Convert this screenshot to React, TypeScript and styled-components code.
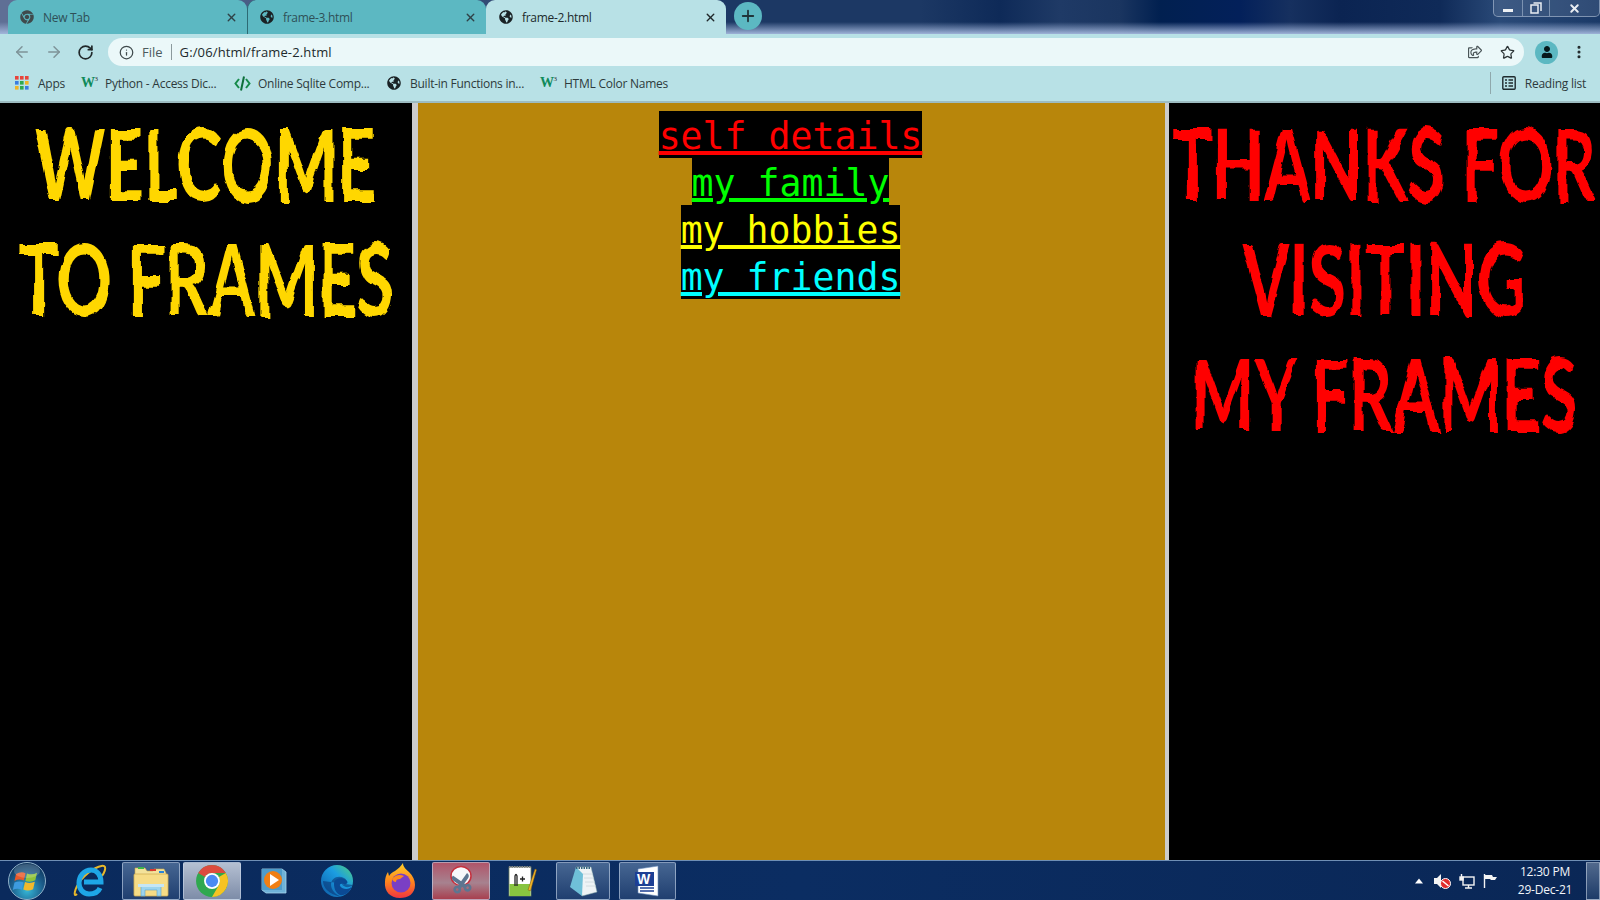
import React from "react";
import styled, { createGlobalStyle } from "styled-components";
import { ArrowLeft, ArrowRight, RotateCw, Info, Star, MoreVertical, X, Plus } from "lucide-react";
import { FaGlobeAmericas, FaChrome, FaRegShareSquare, FaUser, FaCut } from "react-icons/fa";

const Global = createGlobalStyle`
  html, body { margin: 0; padding: 0; background: #000; }
  body { width: 1600px; height: 900px; overflow: hidden; font-family: "Open Sans", "Liberation Sans", sans-serif; }
  a { color: inherit; }
`;

const Screen = styled.div`
  width: 1600px;
  height: 900px;
  display: flex;
  flex-direction: column;
  overflow: hidden;
`;

const TabStrip = styled.div`
  height: 34px;
  flex: none;
  display: flex;
  align-items: stretch;
  padding-left: 8px;
  background:
    linear-gradient(180deg, rgba(150,170,210,0) 0, rgba(150,170,210,0) 22px, rgba(165,185,222,.95) 34px),
    linear-gradient(90deg, #5f6f95 0, #5f6f95 8px, #1c3864 730px, #1c3864 920px, #0e2a58 1000px, #1f3a66 1060px, #1a3560 1120px, #012050 1160px, #03205a 1240px, #16305f 1290px, #0b2452 1340px, #0f2a58 1440px, #2a4a78 1500px, #1b3a68 1600px);
`;

const Tab = styled.div<{ $active?: boolean; $sep?: boolean }>`
  width: ${(p) => (p.$active ? 240 : 239)}px;
  flex: none;
  box-sizing: border-box;
  display: flex;
  align-items: center;
  padding: 0 9px 0 ${(p) => (p.$active ? 13 : 12)}px;
  gap: 9px;
  border-radius: 9px 9px 0 0;
  background: ${(p) => (p.$active ? "#b8e1e6" : "#5cb8c2")};
  color: ${(p) => (p.$active ? "#202a2c" : "#2f5057")};
  border-left: ${(p) => (p.$sep ? "1px solid #2d6a74" : "0 solid transparent")};
  font-size: 12px;
  letter-spacing: -0.3px;
  svg { flex: none; }
`;

const TabTitle = styled.span`
  flex: 1;
  white-space: nowrap;
`;

const NewTab = styled.div`
  width: 28px;
  height: 28px;
  flex: none;
  margin: 2px 0 0 8px;
  border-radius: 50%;
  background: #5cb8c2;
  display: flex;
  align-items: center;
  justify-content: center;
  color: #20353a;
`;

const WindowButtons = styled.div`
  margin-left: auto;
  width: 107px;
  height: 17px;
  box-sizing: border-box;
  display: grid;
  grid-template-columns: 29px 27px 1fr;
  border: 1px solid rgba(190, 205, 225, .55);
  border-top: 0;
  border-radius: 0 0 5px 5px;
  background: rgba(255, 255, 255, .09);
`;

const WindowButton = styled.div<{ $last?: boolean }>`
  display: flex;
  align-items: center;
  justify-content: center;
  color: #e9edf2;
  border-right: ${(p) => (p.$last ? "0" : "1px solid rgba(190,205,225,.5)")};
`;

const MinBar = styled.span`
  width: 10px;
  height: 3px;
  margin-top: 4px;
  background: #eef1f4;
`;

const Toolbar = styled.div`
  height: 35px;
  flex: none;
  box-sizing: border-box;
  background: #b8e1e6;
  display: flex;
  align-items: center;
  padding: 4px 0 3px 13px;
  color: #7d9297;
`;

const NavIcon = styled.span<{ $dark?: boolean }>`
  width: 32px;
  display: flex;
  justify-content: flex-start;
  color: ${(p) => (p.$dark ? "#20282a" : "#7e9398")};
`;

const Omnibox = styled.div`
  margin-left: -1px;
  width: 1416px;
  height: 28px;
  flex: none;
  box-sizing: border-box;
  border-radius: 14px;
  background: #ebf8f9;
  display: flex;
  align-items: center;
  padding: 0 9px 0 11px;
  font-size: 13px;
  color: #202a2c;
`;

const SchemeLabel = styled.span`
  color: #4c5b5e;
  margin-left: 8px;
  padding-right: 8px;
  border-right: 1px solid #8c9a9d;
  line-height: 16px;
`;

const UrlText = styled.span`
  margin-left: 8px;
  flex: 1;
  letter-spacing: 0.13px;
`;

const OmniActions = styled.div`
  display: flex;
  align-items: center;
  gap: 18px;
  color: #4a5558;
`;

const Avatar = styled.div`
  width: 23px;
  height: 23px;
  margin-left: 11px;
  flex: none;
  border-radius: 50%;
  background: #5cb8c2;
  display: flex;
  align-items: center;
  justify-content: center;
  overflow: hidden;
  color: #06181b;
`;

const MenuDots = styled.span`
  margin-left: 13px;
  display: flex;
  color: #20282a;
`;

const Bookmarks = styled.div`
  height: 34px;
  flex: none;
  box-sizing: border-box;
  background: #b8e1e6;
  border-bottom: 2px solid #9dbcc1;
  display: flex;
  align-items: center;
  padding: 0 14px 4px 15px;
  font-size: 12px;
  color: #2d3a3c;
  white-space: nowrap;
`;

const Bookmark = styled.div<{ $w: number; $gap?: number }>`
  width: ${(p) => p.$w}px;
  flex: none;
  display: flex;
  align-items: center;
  gap: ${(p) => p.$gap ?? 7}px;
  letter-spacing: -0.25px;
`;

const W3Mark = styled.span`
  width: 17px;
  flex: none;
  font-family: "Liberation Serif", serif;
  font-weight: 700;
  font-size: 14px;
  line-height: 14px;
  letter-spacing: -0.5px;
  color: #0f8a5a;
  sup { font-size: 7px; line-height: 0; color: #333; vertical-align: 6px; font-weight: 400; }
`;

const ReadingList = styled.div`
  margin-left: auto;
  display: flex;
  align-items: center;
  gap: 9px;
  height: 22px;
  padding-left: 11px;
  border-left: 1px solid #8fa8ac;
  letter-spacing: -0.25px;
`;

const Frames = styled.main`
  flex: 1;
  min-height: 0;
  display: flex;
  background: #000;
`;

const SideFrame = styled.section<{ $w: number; $color: string }>`
  width: ${(p) => p.$w}px;
  flex: none;
  overflow: hidden;
  color: ${(p) => p.$color};
  padding-top: 2px;
  box-sizing: border-box;
`;

const FrameBorder = styled.div<{ $w: number }>`
  width: ${(p) => p.$w}px;
  flex: none;
  background: #cccccc;
`;

const ChillerLine = styled.div`
  height: 115px;
  display: flex;
  justify-content: center;
`;

const ChillerText = styled.span`
  flex: none;
  line-height: 115px;
  white-space: nowrap;
  font-family: "Lato", "Liberation Sans", sans-serif;
  font-weight: 700;
  font-size: 100px;
  transform: scaleX(0.67);
  filter: url(#rough);
`;

const CenterFrame = styled.section`
  flex: 1;
  background: #b8860b;
  padding: 8px 2px 0 0;
  display: flex;
  flex-direction: column;
  align-items: center;
`;

const NavLink = styled.a<{ $color: string }>`
  height: 47px;
  line-height: 51px;
  background: #000;
  color: ${(p) => p.$color};
  font-family: "DejaVu Sans Mono", monospace;
  font-size: 36.5px;
  white-space: pre;
  text-decoration: underline;
  text-decoration-thickness: 4px;
  text-underline-offset: 2px;
`;

const Taskbar = styled.footer`
  height: 40px;
  flex: none;
  box-sizing: border-box;
  display: flex;
  align-items: stretch;
  padding-top: 1px;
  border-top: 1px solid #6f8fb5;
  background: linear-gradient(90deg, #0a2a5c 0, #0b2d62 50%, #0a2756 100%);
`;

const TaskSlot = styled.div<{ $w: number; $gap?: number; $state?: "open" | "active" | "snip" }>`
  width: ${(p) => p.$w}px;
  margin-left: ${(p) => p.$gap ?? 3}px;
  flex: none;
  box-sizing: border-box;
  display: flex;
  align-items: center;
  justify-content: center;
  border-radius: 2px;
  border: ${(p) => (p.$state ? "1px solid rgba(200,215,235,.6)" : "1px solid transparent")};
  background: ${(p) =>
    p.$state === "active"
      ? "linear-gradient(180deg,#b5c0d2,#7d8ca8)"
      : p.$state === "snip"
      ? "linear-gradient(180deg,#b0556a,#a7828f 55%,#a8404f)"
      : p.$state === "open"
      ? "linear-gradient(180deg,#466692,#203f70)"
      : "transparent"};
`;

const OrbSlot = styled.div`
  width: 58px;
  flex: none;
  display: flex;
  align-items: center;
  padding-left: 7px;
  box-sizing: border-box;
`;

const Tray = styled.div`
  margin-left: auto;
  display: flex;
  align-items: center;
  color: #fff;
`;

const TrayIcons = styled.div`
  display: flex;
  align-items: center;
  gap: 8px;
  margin-right: 11px;
`;

const TrayArrowBox = styled.svg`
  margin-right: 9px;
`;

const Clock = styled.div`
  width: 72px;
  text-align: center;
  font-size: 12px;
  line-height: 18px;
  color: #f2f5f9;
  letter-spacing: -0.2px;
`;

const ShowDesktop = styled.div`
  width: 14px;
  align-self: stretch;
  margin-left: 5px;
  box-sizing: border-box;
  border: 1px solid rgba(210,220,235,.55);
  background: linear-gradient(180deg,#51698d,#1d3b68);
`;

const SnipBox = styled.span`
  display: flex;
  position: relative;
`;

const SnipScissors = styled(FaCut)`
  position: absolute;
  left: 5px;
  top: 8px;
  transform: rotate(-100deg);
  color: #5d7590;
`;

const HiddenDefs = styled.svg`
  display: block;
`;

const Apps = () => (
  <svg width="14" height="14" viewBox="0 0 14 14">
    {["#e8443a","#e8443a","#e8443a","#3a7de0","#2fa84f","#f0b428","#f0b428","#2fa84f","#3a7de0"].map((c, i) => (
      <rect key={i} x={(i % 3) * 5} y={Math.floor(i / 3) * 5} width="3.6" height="3.6" fill={c} />
    ))}
  </svg>
);

const CodeMark = () => (
  <svg width="17" height="17" viewBox="0 0 17 17" fill="none" stroke="#168a4a" strokeWidth="2">
    <path d="M5 4 1.5 8.5 5 13M12 4l3.5 4.5L12 13" />
    <path d="M10 1.5 7 15.5" stroke="#0d6e3a" />
  </svg>
);

const ReadingIcon = () => (
  <svg width="14" height="14" viewBox="0 0 14 14" fill="none" stroke="#1f2b2e" strokeWidth="1.4">
    <rect x=".8" y=".8" width="12.4" height="12.4" rx="1" />
    <path d="M3 4h2M3 7h2M3 10h2M6.5 4H11M6.5 7H11M6.5 10H11" />
  </svg>
);

const Orb = () => (
  <svg width="40" height="40" viewBox="0 0 40 40">
    <defs>
      <radialGradient id="orbg" cx=".5" cy=".75" r=".8">
        <stop offset="0" stopColor="#35b8d8" />
        <stop offset=".55" stopColor="#1c5c8a" />
        <stop offset="1" stopColor="#0c2c50" />
      </radialGradient>
    </defs>
    <circle cx="20" cy="20" r="18.5" fill="url(#orbg)" stroke="#8fb0c8" strokeWidth="1" />
    <path d="M9 13q5-3 9.5-.8l-1.7 7.3q-5-2-9.3.5z" fill="#e8592a" />
    <path d="M20 12.4q5 2.2 10-.6l-1.7 7.5q-5 2.5-9.9.6z" fill="#8fc43a" />
    <path d="M7.5 21.5q5-2 9 0l-1.7 7.3q-5-2-9 .3z" fill="#3d9be0" />
    <path d="M18 21q5 2 9.8-.2l-1.7 7.4q-5 2.3-9.8.2z" fill="#f2b92c" />
    <ellipse cx="20" cy="10" rx="13" ry="7" fill="#fff" opacity=".18" />
  </svg>
);

const IE = () => (
  <svg width="36" height="36" viewBox="0 0 36 36" fill="none">
    <path d="M5 31C1 35 2 26 9 17 17 7 31 0 33 4c1 3-1 6-3 9" stroke="#e8b82a" strokeWidth="2" />
    <path d="M28 25c-2 5-7 6-11 6-6 0-10-5-10-11 0-7 5-13 12-13 6 0 10 5 10 12H12" stroke="#1ea6e6" strokeWidth="5" />
  </svg>
);

const Explorer = () => (
  <svg width="38" height="34" viewBox="0 0 38 34">
    <path d="M3 4h10l2 3h6l1-2h10l2 4v3H3z" fill="#f3e29a" stroke="#c9a84a" strokeWidth=".6" />
    <rect x="6" y="3" width="6" height="2" fill="#3cb44b" />
    <rect x="18" y="5" width="6" height="2" fill="#d83a2e" />
    <rect x="27" y="7" width="5" height="2" fill="#2a86d8" />
    <rect x="2" y="10" width="34" height="22" rx="1" fill="#f6dc86" stroke="#d1ae54" strokeWidth=".8" />
    <path d="M9 32V22h20v10h-4v-6H13v6z" fill="#9bd4ee" stroke="#5aa3cc" strokeWidth=".6" />
    <rect x="6" y="20" width="26" height="3" fill="#c5e6f5" />
  </svg>
);

const Chrome = () => (
  <svg width="34" height="34" viewBox="0 0 32 32">
    <circle cx="16" cy="16" r="15" fill="#2fa84f" />
    <path d="M16 1a15 15 0 0 1 13 7.5H16a7.5 7.5 0 0 0-6.5 3.75L3 8.5A15 15 0 0 1 16 1z" fill="#dd4b3e" />
    <path d="M29 8.5A15 15 0 0 1 16 31l6.5-11.25A7.5 7.5 0 0 0 22.5 12.25z" fill="#f6c324" />
    <circle cx="16" cy="16" r="7.5" fill="#fff" />
    <circle cx="16" cy="16" r="5.8" fill="#4a8af4" />
  </svg>
);

const WMP = () => (
  <svg width="28" height="30" viewBox="0 0 28 30">
    <path d="M2 3h20l4 3v21H6l-4-3z" fill="#6fb2d8" stroke="#a7d6ee" strokeWidth=".8" />
    <rect x="2" y="3" width="20" height="21" fill="#4e9ccb" />
    <circle cx="13" cy="14" r="9" fill="#f07f14" />
    <path d="M10 8l9 6-9 6z" fill="#fff" />
  </svg>
);

const Edge = () => (
  <svg width="34" height="34" viewBox="0 0 34 34">
    <defs>
      <linearGradient id="edg" x1="0" y1="1" x2="1" y2="0">
        <stop offset="0" stopColor="#0c59a4" />
        <stop offset=".6" stopColor="#1b9de2" />
        <stop offset="1" stopColor="#52d17c" />
      </linearGradient>
    </defs>
    <circle cx="17" cy="17" r="16" fill="url(#edg)" />
    <path d="M33 21c-3 3-9 3-11-1 5 1 6-4 2-6-6-3-13 0-13 7 0 5 5 10 11 12-7-1-19-6-19-16z" fill="#0a2f6e" opacity=".55" />
    <path d="M14 20c0-6 8-7 12-4 3 2 1 5-2 4-4-1-6 1-2 4 4 2 8 1 10-2-2 7-8 10-12 9-4-2-6-6-6-11z" fill="#0b4a94" />
  </svg>
);

const Firefox = () => (
  <svg width="32" height="36" viewBox="0 0 32 36">
    <defs>
      <linearGradient id="ffg" x1="0" y1="0" x2="0" y2="1">
        <stop offset="0" stopColor="#ffd02a" />
        <stop offset=".5" stopColor="#ff8a1c" />
        <stop offset="1" stopColor="#f0353f" />
      </linearGradient>
    </defs>
    <path d="M16 35C6 35 0 28 1 19c0-4 1-7 3-10l1 4c2-3 4-4 6-5 3-2 6-5 8-8 0 4 3 6 6 9 4 4 6 8 6 13 0 9-7 13-15 13z" fill="url(#ffg)" />
    <circle cx="17" cy="20" r="9.5" fill="#7a3fc4" />
    <path d="M8 16c3-4 8-5 12-3l-4 3c-3 0-4 1-4 3-2 0-3-1-4-3z" fill="#ff8a1c" />
  </svg>
);

const Snip = () => (
  <SnipBox>
    <svg width="30" height="32" viewBox="0 0 30 32">
      <ellipse cx="15" cy="11" rx="10" ry="9.5" fill="#f7f7fa" stroke="#c5303d" strokeWidth="1.5" />
    </svg>
    <SnipScissors size={21} />
  </SnipBox>
);

const NotepadPP = () => (
  <svg width="30" height="34" viewBox="0 0 30 34">
    <rect x="2" y="3" width="22" height="29" fill="#fff" stroke="#6e7f60" strokeWidth=".8" />
    <rect x="2.5" y="20" width="21" height="12" fill="#88c440" />
    <path d="M2 3h22" stroke="#888" strokeWidth="2" strokeDasharray="1.5 1" />
    <path d="M8 22V12q1-3 2 0v10M13 15h5M15.5 12.5v5" stroke="#222" strokeWidth="1.3" fill="none" />
    <path d="M21 26 28 5l1.5.8-6 21z" fill="#f0b428" stroke="#805a10" strokeWidth=".5" />
  </svg>
);

const Notepad = () => (
  <svg width="32" height="34" viewBox="0 0 32 34">
    <path d="M9 3h15l6 25-15 4z" fill="#eef3f5" stroke="#8aa" strokeWidth=".5" />
    <path d="M9 3 3 23l12 9 1-22z" fill="#6fc0d8" />
    <path d="M16 10h10M17 14h10M18 18h10M19 22h10" stroke="#c9d5da" strokeWidth=".8" />
    <path d="M9 4h15" stroke="#34657f" strokeWidth="2" strokeDasharray="1.5 1" />
  </svg>
);

const Word = () => (
  <svg width="32" height="32" viewBox="0 0 32 32">
    <path d="M6 4l20-3v30L6 28z" fill="#fff" stroke="#6d8fc0" strokeWidth=".6" />
    <rect x="3" y="7" width="19" height="14" fill="#1d3f94" />
    <text x="5" y="19" fontFamily="Liberation Sans, sans-serif" fontWeight="700" fontSize="14" fill="#fff">W</text>
    <path d="M8 23h14M8 26h14" stroke="#1d3f94" strokeWidth="1.5" />
  </svg>
);

const TrayArrow = () => (
  <TrayArrowBox width="10" height="6" viewBox="0 0 10 6">
    <path d="M5 .5 9 5.5H1z" fill="#fff" />
  </TrayArrowBox>
);

const Speaker = () => (
  <svg width="18" height="16" viewBox="0 0 18 16">
    <path d="M1 5h3l4-4v14l-4-4H1z" fill="#f4f4f4" />
    <circle cx="12.5" cy="10.5" r="5" fill="#e02b2b" stroke="#fff" />
    <path d="M9.5 8 15.5 13" stroke="#fff" strokeWidth="1.5" />
  </svg>
);

const Network = () => (
  <svg width="16" height="16" viewBox="0 0 16 16" fill="none" stroke="#f4f4f4" strokeWidth="1.4">
    <rect x="4" y="4" width="11" height="8" />
    <path d="M6 15h7M9.5 12v3M2.5 1v6" />
    <rect x="1" y="4" width="3" height="3" fill="#f4f4f4" />
  </svg>
);

const Flag = () => (
  <svg width="15" height="16" viewBox="0 0 15 16">
    <path d="M1.5 1v14" stroke="#f4f4f4" strokeWidth="1.4" />
    <path d="M2 2h7l1 2h4l-2 3H8L7 6H2z" fill="#f4f4f4" />
  </svg>
);

const FilterDefs = () => (
  <HiddenDefs width="0" height="0" aria-hidden="true">
    <filter id="rough" x="-5%" y="-5%" width="110%" height="110%">
      <feTurbulence type="fractalNoise" baseFrequency="0.035" numOctaves="3" seed="7" result="n" />
      <feDisplacementMap in="SourceGraphic" in2="n" scale="10" />
    </filter>
  </HiddenDefs>
);

const Chiller = ({ children }: { children: string }) => (
  <ChillerLine>
    <ChillerText>{children}</ChillerText>
  </ChillerLine>
);

export default function App() {
  return (
    <>
      <Global />
      <FilterDefs />
      <Screen>
        <TabStrip>
          <Tab>
            <FaChrome size={14} color="#3f4a4c" />
            <TabTitle>New Tab</TabTitle>
            <X size={13} strokeWidth={2.6} color="#2f4146" />
          </Tab>
          <Tab $sep>
            <FaGlobeAmericas size={14} color="#1a2225" />
            <TabTitle>frame-3.html</TabTitle>
            <X size={13} strokeWidth={2.6} color="#2f4146" />
          </Tab>
          <Tab $active>
            <FaGlobeAmericas size={14} color="#1a2225" />
            <TabTitle>frame-2.html</TabTitle>
            <X size={13} strokeWidth={2.6} color="#20282a" />
          </Tab>
          <NewTab>
            <Plus size={18} strokeWidth={2.4} />
          </NewTab>
          <WindowButtons>
            <WindowButton><MinBar /></WindowButton>
            <WindowButton>
              <svg width="12" height="12" viewBox="0 0 12 12" fill="none" stroke="#e9edf2" strokeWidth="1.5">
                <rect x="1" y="3" width="7" height="8" />
                <path d="M3.5 1H11v8" />
              </svg>
            </WindowButton>
            <WindowButton $last><X size={13} strokeWidth={3.6} /></WindowButton>
          </WindowButtons>
        </TabStrip>

        <Toolbar>
          <NavIcon><ArrowLeft size={18} strokeWidth={2} /></NavIcon>
          <NavIcon><ArrowRight size={18} strokeWidth={2} /></NavIcon>
          <NavIcon $dark><RotateCw size={17} strokeWidth={2.4} /></NavIcon>
          <Omnibox>
            <Info size={15} color="#3f4a4c" />
            <SchemeLabel>File</SchemeLabel>
            <UrlText>G:/06/html/frame-2.html</UrlText>
            <OmniActions>
              <FaRegShareSquare size={14} />
              <Star size={15} strokeWidth={2} color="#2c3436" />
            </OmniActions>
          </Omnibox>
          <Avatar><FaUser size={12} /></Avatar>
          <MenuDots><MoreVertical size={16} strokeWidth={2.6} /></MenuDots>
        </Toolbar>

        <Bookmarks>
          <Bookmark $w={66} $gap={9}><Apps />Apps</Bookmark>
          <Bookmark $w={153}><W3Mark>W<sup>3</sup></W3Mark>Python - Access Dic...</Bookmark>
          <Bookmark $w={153}><CodeMark />Online Sqlite Comp...</Bookmark>
          <Bookmark $w={153} $gap={9}><FaGlobeAmericas size={14} color="#1a2225" />Built-in Functions in...</Bookmark>
          <Bookmark $w={140}><W3Mark>W<sup>3</sup></W3Mark>HTML Color Names</Bookmark>
          <ReadingList><ReadingIcon />Reading list</ReadingList>
        </Bookmarks>

        <Frames>
          <SideFrame $w={412} $color="#ffd700">
            <Chiller>WELCOME</Chiller>
            <Chiller>TO FRAMES</Chiller>
          </SideFrame>
          <FrameBorder $w={6} />
          <CenterFrame>
            <NavLink href="#" $color="#ff0000">self details</NavLink>
            <NavLink href="#" $color="#00ff00">my family</NavLink>
            <NavLink href="#" $color="#ffff00">my hobbies</NavLink>
            <NavLink href="#" $color="#00ffff">my friends</NavLink>
          </CenterFrame>
          <FrameBorder $w={4} />
          <SideFrame $w={431} $color="#ff0000">
            <Chiller>THANKS FOR</Chiller>
            <Chiller>VISITING</Chiller>
            <Chiller>MY FRAMES</Chiller>
          </SideFrame>
        </Frames>

        <Taskbar>
          <OrbSlot><Orb /></OrbSlot>
          <TaskSlot $w={58}><IE /></TaskSlot>
          <TaskSlot $w={58} $state="open"><Explorer /></TaskSlot>
          <TaskSlot $w={58} $state="active"><Chrome /></TaskSlot>
          <TaskSlot $w={60}><WMP /></TaskSlot>
          <TaskSlot $w={60}><Edge /></TaskSlot>
          <TaskSlot $w={59}><Firefox /></TaskSlot>
          <TaskSlot $w={58} $state="snip"><Snip /></TaskSlot>
          <TaskSlot $w={58}><NotepadPP /></TaskSlot>
          <TaskSlot $w={54} $gap={5} $state="open"><Notepad /></TaskSlot>
          <TaskSlot $w={57} $gap={9} $state="open"><Word /></TaskSlot>
          <Tray>
            <TrayArrow />
            <TrayIcons>
              <Speaker />
              <Network />
              <Flag />
            </TrayIcons>
            <Clock>
              <div>12:30 PM</div>
              <div>29-Dec-21</div>
            </Clock>
            <ShowDesktop />
          </Tray>
        </Taskbar>
      </Screen>
    </>
  );
}
